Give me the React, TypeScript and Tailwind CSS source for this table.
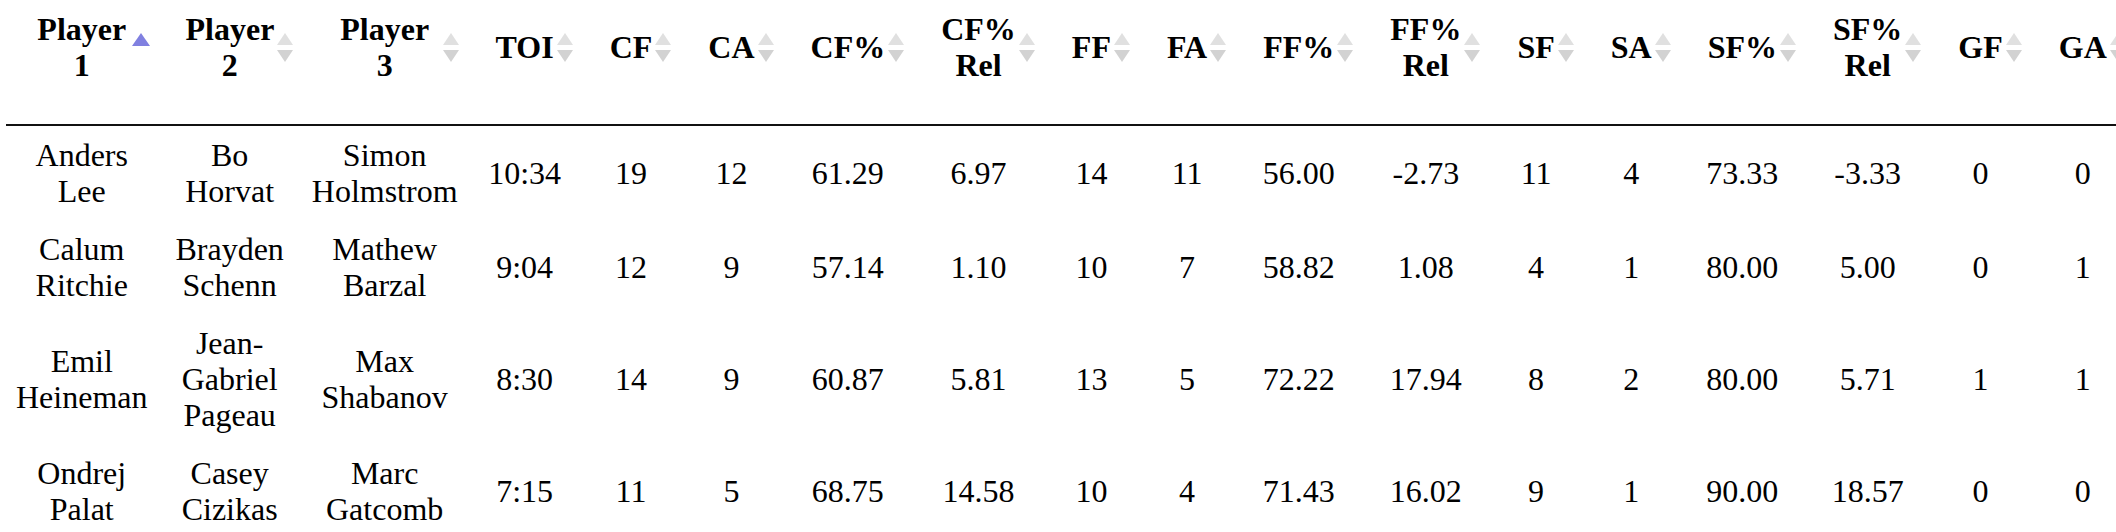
const headers = [
  "Player 1",
  "Player 2",
  "Player 3",
  "TOI",
  "CF",
  "CA",
  "CF%",
  "CF% Rel",
  "FF",
  "FA",
  "FF%",
  "FF% Rel",
  "SF",
  "SA",
  "SF%",
  "SF% Rel",
  "GF",
  "GA",
];

const rows = [
  ["Anders Lee", "Bo Horvat", "Simon Holmstrom", "10:34", "19", "12", "61.29", "6.97", "14", "11", "56.00", "-2.73", "11", "4", "73.33", "-3.33", "0", "0"],
  ["Calum Ritchie", "Brayden Schenn", "Mathew Barzal", "9:04", "12", "9", "57.14", "1.10", "10", "7", "58.82", "1.08", "4", "1", "80.00", "5.00", "0", "1"],
  ["Emil Heineman", "Jean-Gabriel Pageau", "Max Shabanov", "8:30", "14", "9", "60.87", "5.81", "13", "5", "72.22", "17.94", "8", "2", "80.00", "5.71", "1", "1"],
  ["Ondrej Palat", "Casey Cizikas", "Marc Gatcomb", "7:15", "11", "5", "68.75", "14.58", "10", "4", "71.43", "16.02", "9", "1", "90.00", "18.57", "0", "0"],
];

function SortIcon({ active }: { active?: boolean }) {
  return (
    <svg
      width="18"
      height="30"
      viewBox="0 0 18 30"
      className="absolute right-[8px] top-[33px]"
    >
      {active ? (
        <path d="M9 0 L18 13 L0 13 Z" fill="#8080e0" />
      ) : (
        <>
          <path d="M9 0 L17 12 L1 12 Z" fill="#e0e0e0" />
          <path d="M1 17 L17 17 L9 29 Z" fill="#d2d2d2" />
        </>
      )}
    </svg>
  );
}

export default function App() {
  return (
    <div className="h-screen w-screen overflow-hidden bg-white font-['Liberation_Serif',serif] text-[32px] leading-[36px] text-black">
      <table className="ml-[6px] w-px border-separate border-spacing-0">
        <thead>
          <tr>
            {headers.map((h, i) => (
              <th
                key={h}
                className="relative border-b-2 border-[#111] px-[28px] pb-[41px] pt-[11px] text-center align-middle font-bold"
              >
                {h}
                <SortIcon active={i === 0} />
              </th>
            ))}
          </tr>
        </thead>
        <tbody>
          {rows.map((row, r) => (
            <tr key={r}>
              {row.map((cell, c) => (
                <td key={c} className="px-[10px] py-[11px] text-center align-middle">
                  {cell}
                </td>
              ))}
            </tr>
          ))}
        </tbody>
      </table>
    </div>
  );
}
